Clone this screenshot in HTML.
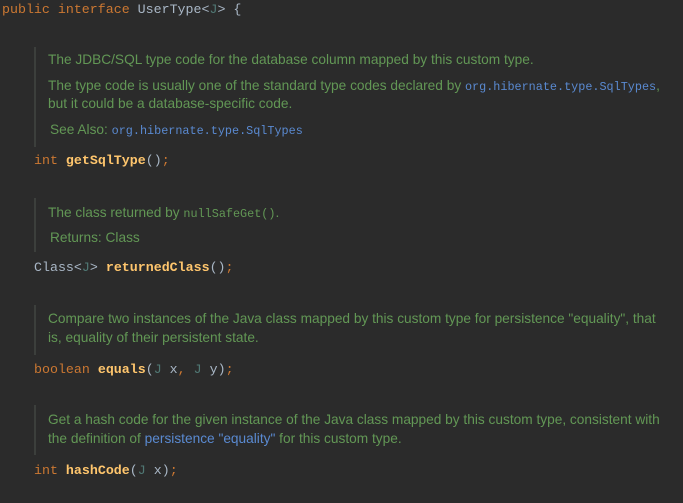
<!DOCTYPE html>
<html><head><meta charset="utf-8"><style>
body{margin:0;width:683px;height:503px;background:#2b2b2b;overflow:hidden;position:relative}
.c{position:absolute;font-family:"Liberation Mono",monospace;font-size:13.3px;color:#a9b7c6;white-space:pre;line-height:16px}
.k{color:#cc7832}.m{color:#ffc66d;font-weight:bold}.t{color:#507874}
.d{position:absolute;font-family:"Liberation Sans",sans-serif;font-size:13.7px;color:#629755;white-space:pre;line-height:16px}
.d code{font-family:"Liberation Mono",monospace;font-size:11.8px}
.l{color:#5a8ad1}
.b{position:absolute;left:34px;width:2px;background:#3c3f3c}
</style></head><body>
<div class="c" style="left:2px;top:2px"><span class="k">public interface </span>UserType&lt;<span class="t">J</span>&gt; {</div>

<div class="b" style="top:47px;height:100px"></div>
<div class="d" style="left:48px;top:52px">The JDBC/SQL type code for the database column mapped by this custom type.</div>
<div class="d" style="left:48px;top:78px">The type code is usually one of the standard type codes declared by <code class="l">org.hibernate.type.SqlTypes</code>,</div>
<div class="d" style="left:48px;top:96px">but it could be a database-specific code.</div>
<div class="d" style="left:50px;top:122px">See Also: <code class="l">org.hibernate.type.SqlTypes</code></div>
<div class="c" style="left:34px;top:153px"><span class="k">int </span><span class="m">getSqlType</span>()<span class="k">;</span></div>

<div class="b" style="top:198px;height:54px"></div>
<div class="d" style="left:48px;top:205px">The class returned by <code>nullSafeGet()</code>.</div>
<div class="d" style="left:50px;top:230px">Returns: Class</div>
<div class="c" style="left:34px;top:260px">Class&lt;<span class="t">J</span>&gt; <span class="m">returnedClass</span>()<span class="k">;</span></div>

<div class="b" style="top:305px;height:50px"></div>
<div class="d" style="left:48px;top:311px">Compare two instances of the Java class mapped by this custom type for persistence "equality", that</div>
<div class="d" style="left:48px;top:330px">is, equality of their persistent state.</div>
<div class="c" style="left:34px;top:362px"><span class="k">boolean </span><span class="m">equals</span>(<span class="t">J</span> x<span class="k">, </span><span class="t">J</span> y)<span class="k">;</span></div>

<div class="b" style="top:405px;height:50px"></div>
<div class="d" style="left:48px;top:412px">Get a hash code for the given instance of the Java class mapped by this custom type, consistent with</div>
<div class="d" style="left:48px;top:431px">the definition of <span class="l">persistence "equality"</span> for this custom type.</div>
<div class="c" style="left:34px;top:463px"><span class="k">int </span><span class="m">hashCode</span>(<span class="t">J</span> x)<span class="k">;</span></div>
</body></html>
